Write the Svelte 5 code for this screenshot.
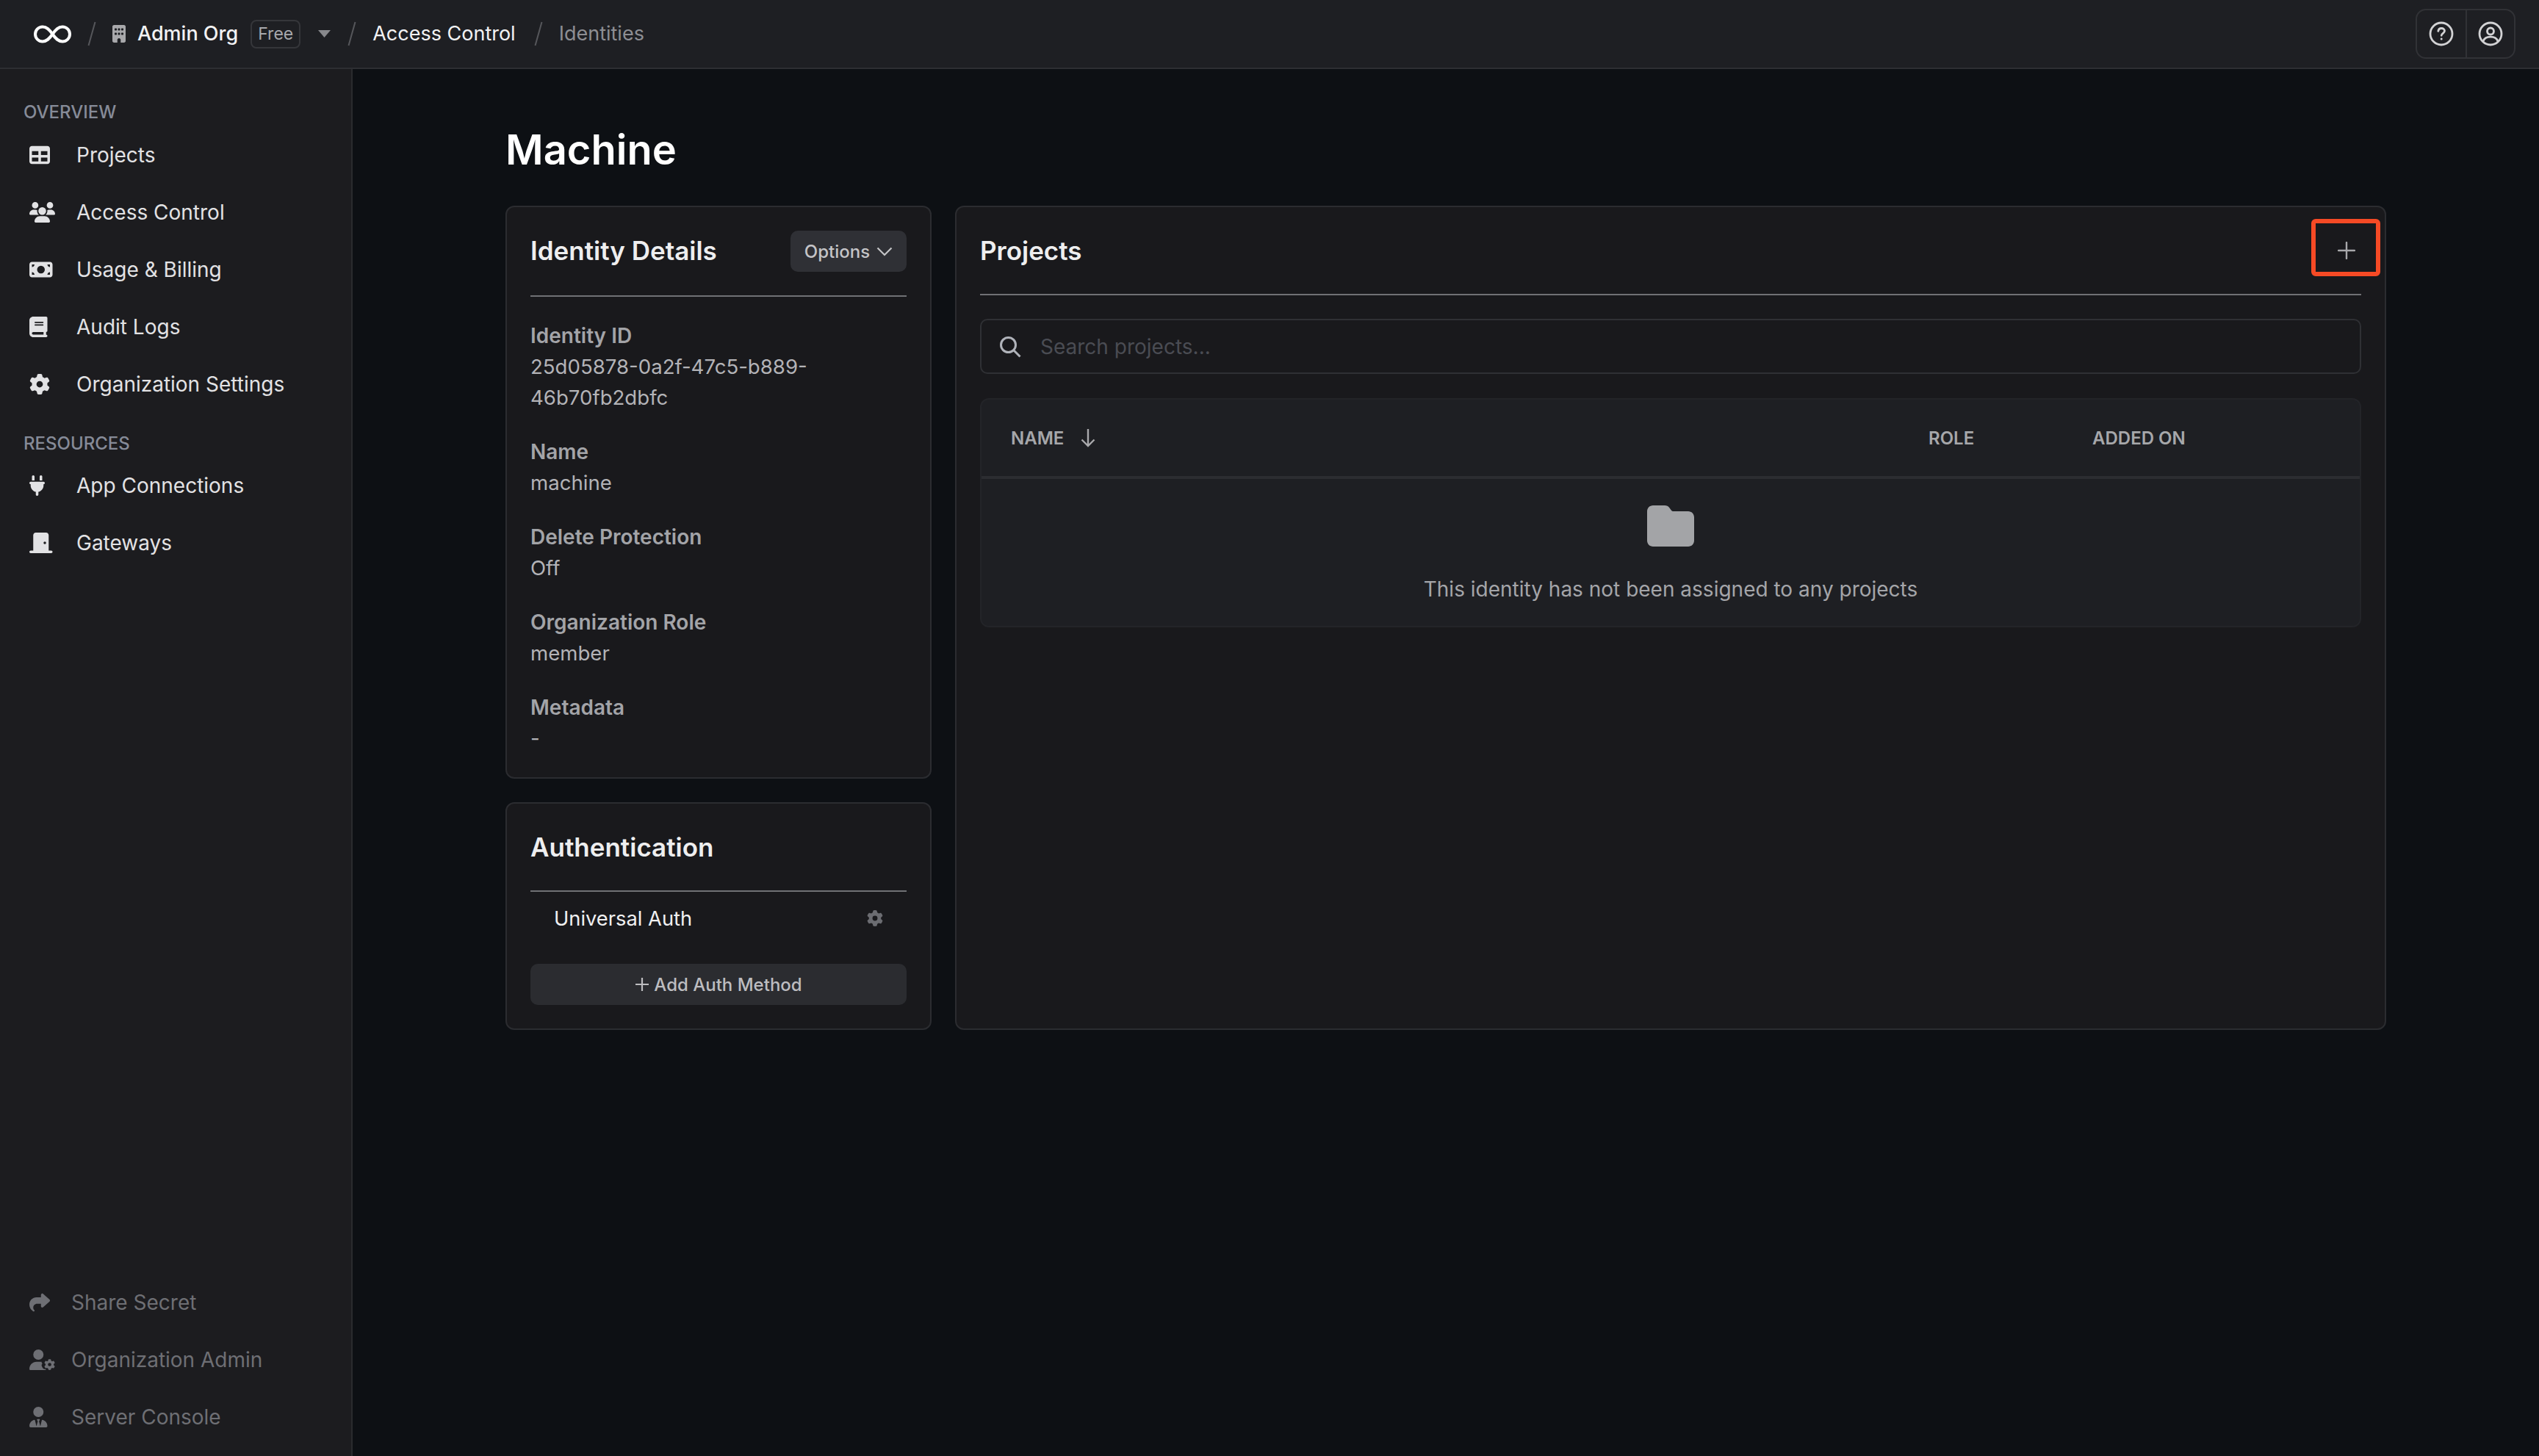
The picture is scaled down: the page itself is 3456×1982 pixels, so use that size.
<script>
  const gear =
    "M495.9 166.6c3.2 8.7 .5 18.4-6.4 24.6l-43.3 39.4c1.1 8.3 1.7 16.8 1.7 25.4s-.6 17.1-1.7 25.4l43.3 39.4c6.9 6.2 9.6 15.9 6.4 24.6c-4.4 11.9-9.7 23.3-15.8 34.3l-4.7 8.1c-6.6 11-14 21.4-22.1 31.2c-5.9 7.2-15.7 9.6-24.5 6.8l-55.7-17.7c-13.4 10.3-28.2 18.9-44 25.4l-12.5 57.1c-2 9.1-9 16.3-18.2 17.8c-13.8 2.3-28 3.5-42.5 3.5s-28.7-1.2-42.5-3.5c-9.2-1.5-16.2-8.7-18.2-17.8l-12.5-57.1c-15.8-6.5-30.6-15.1-44-25.4L83.1 425.9c-8.8 2.8-18.6 .3-24.5-6.8c-8.1-9.8-15.5-20.2-22.1-31.2l-4.7-8.1c-6.1-11-11.4-22.4-15.8-34.3c-3.2-8.7-.5-18.4 6.4-24.6l43.3-39.4C64.6 273.1 64 264.6 64 256s.6-17.1 1.7-25.4L22.4 191.2c-6.9-6.2-9.6-15.9-6.4-24.6c4.4-11.9 9.7-23.3 15.8-34.3l4.7-8.1c6.6-11 14-21.4 22.1-31.2c5.9-7.2 15.7-9.6 24.5-6.8l55.7 17.7c13.4-10.3 28.2-18.9 44-25.4l12.5-57.1c2-9.1 9-16.3 18.2-17.8C227.3 1.2 241.5 0 256 0s28.7 1.2 42.5 3.5c9.2 1.5 16.2 8.7 18.2 17.8l12.5 57.1c15.8 6.5 30.6 15.1 44 25.4l55.7-17.7c8.8-2.8 18.6-.3 24.5 6.8c8.1 9.8 15.5 20.2 22.1 31.2l4.7 8.1c6.1 11 11.4 22.4 15.8 34.3zM256 336a80 80 0 1 0 0-160 80 80 0 1 0 0 160z";

  // w = viewBox width, all icons are 512 tall
  const icons = {
    table: { w: 512, d: "M64 256V160H224v96H64zm0 64H224v96H64V320zm224 96V320H448v96H288zM448 256H288V160H448v96zM64 32C28.7 32 0 60.7 0 96V416c0 35.3 28.7 64 64 64H448c35.3 0 64-28.7 64-64V96c0-35.3-28.7-64-64-64H64z" },
    users: { w: 640, d: "M144 0a80 80 0 1 1 0 160A80 80 0 1 1 144 0zM512 0a80 80 0 1 1 0 160A80 80 0 1 1 512 0zM0 298.7C0 239.8 47.8 192 106.7 192h42.7c15.9 0 31 3.5 44.6 9.7c-1.3 7.2-1.9 14.7-1.9 22.3c0 38.2 16.8 72.5 43.3 96c-.2 0-.4 0-.7 0H21.3C9.6 320 0 310.4 0 298.7zM405.3 320c-.2 0-.4 0-.7 0c26.6-23.5 43.3-57.8 43.3-96c0-7.6-.7-15-1.9-22.3c13.6-6.3 28.7-9.7 44.6-9.7h42.7C592.2 192 640 239.8 640 298.7c0 11.8-9.6 21.3-21.3 21.3H405.3zM224 224a96 96 0 1 1 192 0 96 96 0 1 1 -192 0zM128 485.3C128 411.7 187.7 352 261.3 352H378.7C452.3 352 512 411.7 512 485.3c0 14.7-11.9 26.7-26.7 26.7H154.7c-14.7 0-26.7-11.9-26.7-26.7z" },
    money: { w: 576, d: "M64 64C28.7 64 0 92.7 0 128V384c0 35.3 28.7 64 64 64H512c35.3 0 64-28.7 64-64V128c0-35.3-28.7-64-64-64H64zm64 320H64V320c35.3 0 64 28.7 64 64zM64 192V128h64c0 35.3-28.7 64-64 64zM448 384c0-35.3 28.7-64 64-64v64H448zm64-192c-35.3 0-64-28.7-64-64h64v64zM288 160a96 96 0 1 1 0 192 96 96 0 1 1 0-192z" },
    book: { w: 448, d: "M96 0C43 0 0 43 0 96V416c0 53 43 96 96 96H384h32c17.7 0 32-14.3 32-32s-14.3-32-32-32V384c17.7 0 32-14.3 32-32V32c0-17.7-14.3-32-32-32H384 96zm0 384H352v64H96c-17.7 0-32-14.3-32-32s14.3-32 32-32zm32-240c0-8.8 7.2-16 16-16H336c8.8 0 16 7.2 16 16s-7.2 16-16 16H144c-8.8 0-16-7.2-16-16zm16 48H336c8.8 0 16 7.2 16 16s-7.2 16-16 16H144c-8.8 0-16-7.2-16-16s7.2-16 16-16z" },
    gear: { w: 512, d: gear },
    plug: { w: 384, d: "M96 0C78.3 0 64 14.3 64 32v96h64V32c0-17.7-14.3-32-32-32zM288 0c-17.7 0-32 14.3-32 32v96h64V32c0-17.7-14.3-32-32-32zM32 160c-17.7 0-32 14.3-32 32s14.3 32 32 32v32c0 77.4 55 142 128 156.8V480c0 17.7 14.3 32 32 32s32-14.3 32-32V412.8C297 398 352 333.4 352 256V224c17.7 0 32-14.3 32-32s-14.3-32-32-32H32z" },
    door: { w: 576, d: "M96 64c0-35.3 28.7-64 64-64H416c35.3 0 64 28.7 64 64V448h64c17.7 0 32 14.3 32 32s-14.3 32-32 32H432 144 32c-17.7 0-32-14.3-32-32s14.3-32 32-32H96V64zM384 288a32 32 0 1 0 0-64 32 32 0 1 0 0 64z" },
    share: { w: 512, d: "M307 34.8c-11.5 5.1-19 16.6-19 29.2v64H176C78.8 128 0 206.8 0 304C0 417.3 81.5 467.9 100.2 478.1c2.5 1.4 5.3 1.9 8.1 1.9c10.9 0 19.7-8.9 19.7-19.7c0-7.5-4.3-14.4-9.8-19.5C108.8 431.9 96 414.4 96 384c0-53 43-96 96-96h96v64c0 12.6 7.4 24.1 19 29.2s25 3 34.4-5.4l160-144c6.7-6.1 10.6-14.7 10.6-23.8s-3.8-17.7-10.6-23.8l-160-144c-9.4-8.5-22.9-10.6-34.4-5.4z" },
    userGear: { w: 640, d: "M224 0a128 128 0 1 1 0 256A128 128 0 1 1 224 0zM178.3 304h91.4c11.8 0 23.4 1.2 34.5 3.3c-2.1 18.5 7.4 35.6 21.8 44.8c-16.6 10.6-26.7 31.6-20 53.3c4 12.9 9.4 25.5 16.4 37.6s15.2 23.1 24.4 33c15.7 16.9 39.6 18.4 57.2 8.7v.9c0 9.2 2.7 18.5 7.9 26.3H29.7C13.3 512 0 498.7 0 482.3C0 383.8 79.8 304 178.3 304z" },
    userTie: { w: 448, d: "M96 128a128 128 0 1 0 256 0A128 128 0 1 0 96 128zm94.5 200.2l18.6 31L175.8 483.1l-36-146.9c-2-8.1-9.8-13.4-17.9-11.3C51.9 342.4 0 405.8 0 481.3c0 17 13.8 30.7 30.7 30.7H162.5c0 0 0 0 .1 0H168 280h5.5c0 0 0 0 .1 0H417.3c17 0 30.7-13.8 30.7-30.7c0-75.5-51.9-138.9-121.9-156.4c-8.1-2-15.9 3.3-17.9 11.3l-36 146.9L238.9 359.2l18.6-31c6.4-10.7-1.3-24.2-13.7-24.2H224 204.3c-12.4 0-20.1 13.6-13.7 24.2z" },
    building: { w: 384, d: "M48 0C21.5 0 0 21.5 0 48V464c0 26.5 21.5 48 48 48h96V432c0-26.5 21.5-48 48-48s48 21.5 48 48v80h96c26.5 0 48-21.5 48-48V48c0-26.5-21.5-48-48-48H48zM64 240c0-8.8 7.2-16 16-16h32c8.8 0 16 7.2 16 16v32c0 8.8-7.2 16-16 16H80c-8.8 0-16-7.2-16-16V240zm112-16h32c8.8 0 16 7.2 16 16v32c0 8.8-7.2 16-16 16H176c-8.8 0-16-7.2-16-16V240c0-8.8 7.2-16 16-16zm80 16c0-8.8 7.2-16 16-16h32c8.8 0 16 7.2 16 16v32c0 8.8-7.2 16-16 16H272c-8.8 0-16-7.2-16-16V240zM80 96h32c8.8 0 16 7.2 16 16v32c0 8.8-7.2 16-16 16H80c-8.8 0-16-7.2-16-16V112c0-8.8 7.2-16 16-16zm80 16c0-8.8 7.2-16 16-16h32c8.8 0 16 7.2 16 16v32c0 8.8-7.2 16-16 16H176c-8.8 0-16-7.2-16-16V112zM272 96h32c8.8 0 16 7.2 16 16v32c0 8.8-7.2 16-16 16H272c-8.8 0-16-7.2-16-16V112c0-8.8 7.2-16 16-16z" },
    folder: { w: 512, d: "M64 480H448c35.3 0 64-28.7 64-64V160c0-35.3-28.7-64-64-64H288c-10.1 0-19.6-4.7-25.6-12.8L243.2 57.6C231.1 41.5 212.1 32 192 32H64C28.7 32 0 60.7 0 96V416c0 35.3 28.7 64 64 64z" },
  };

  const overview = [
    { label: "Projects", icon: "table" },
    { label: "Access Control", icon: "users" },
    { label: "Usage & Billing", icon: "money" },
    { label: "Audit Logs", icon: "book" },
    { label: "Organization Settings", icon: "gear" },
  ];
  const resources = [
    { label: "App Connections", icon: "plug" },
    { label: "Gateways", icon: "door" },
  ];
  const footerLinks = [
    { label: "Share Secret", icon: "share" },
    { label: "Organization Admin", icon: "userGear" },
    { label: "Server Console", icon: "userTie" },
  ];
  const details = [
    { label: "Identity ID", value: "25d05878-0a2f-47c5-b889-46b70fb2dbfc" },
    { label: "Name", value: "machine" },
    { label: "Delete Protection", value: "Off" },
    { label: "Organization Role", value: "member" },
    { label: "Metadata", value: "-" },
  ];
</script>

{#snippet icon(name, size)}
  <svg class="fa" width={(icons[name].w / 512) * size} height={size} viewBox="0 0 {icons[name].w} 512" fill="currentColor">
    <path d={icons[name].d} />
    {#if name === "userGear"}
      <path d={gear} transform="translate(368 240) scale(.53)" />
    {/if}
  </svg>
{/snippet}

{#snippet slash(cls)}
  <svg class="slash {cls}" width="12" height="34" viewBox="0 0 12 34"><path d="M10.500 1 1.500 33" stroke="#56575b" stroke-width="2" /></svg>
{/snippet}

{#snippet navItem(item)}
  <a class="nav-item">
    <span class="nav-icon">{@render icon(item.icon, 28)}</span>
    <span>{item.label}</span>
  </a>
{/snippet}

<div class="app">
  <header class="topbar">
    <nav class="crumbs">
      <svg class="logo" width="53" height="25" viewBox="0 0 53 25" fill="none">
        <path d="M26.500 12.500C22 6 18.500 2.500 13 2.500a10 10 0 0 0 0 20c5.500 0 9-3.500 13.500-10S34.500 2.500 40 2.500a10 10 0 0 1 0 20c-5.500 0-9-3.500-13.500-10Z" stroke="#fff" stroke-width="4" />
      </svg>
      {@render slash("")}
      <span class="org-icon">{@render icon("building", 24)}</span>
      <span class="crumb org">Admin Org</span>
      <span class="plan">Free</span>
      <svg class="caret" width="17" height="10" viewBox="0 0 17 10"><path d="M0 0h17L8.500 10Z" fill="#87888c" /></svg>
      {@render slash("")}
      <span class="crumb access">Access Control</span>
      {@render slash("wide")}
      <span class="crumb muted">Identities</span>
    </nav>
    <div class="top-actions">
      <button aria-label="Help">
        <svg width="34" height="34" viewBox="0 0 34 34" fill="none" stroke="#d2d2d4" stroke-width="2.800">
          <circle cx="17" cy="17" r="15" />
          <path d="M12.800 13.400c.3-2.400 2.100-3.900 4.400-3.900 2.500 0 4.300 1.500 4.300 3.600 0 3.100-4.300 3.200-4.300 6.200" stroke-linecap="round" />
          <circle cx="17.200" cy="24" r="1.500" fill="#d2d2d4" stroke="none" />
        </svg>
      </button>
      <button aria-label="Account">
        <svg width="34" height="34" viewBox="0 0 34 34" fill="none" stroke="#d2d2d4" stroke-width="2.800">
          <circle cx="17" cy="17" r="15" />
          <circle cx="17" cy="13.500" r="4.500" />
          <path d="M6.800 27.500c1.400-3.900 5.400-6.300 10.200-6.300s8.800 2.400 10.200 6.300" />
        </svg>
      </button>
    </div>
  </header>

  <div class="body">
    <aside class="sidebar">
      <div class="nav-top">
        <div class="nav-title first">OVERVIEW</div>
        {#each overview as item}
          {@render navItem(item)}
        {/each}
        <div class="nav-title second">RESOURCES</div>
        {#each resources as item}
          {@render navItem(item)}
        {/each}
      </div>
      <div class="nav-bottom">
        {#each footerLinks as item}
          {@render navItem(item)}
        {/each}
      </div>
    </aside>

    <main class="content">
      <h1>Machine</h1>
      <div class="columns">
        <div class="left">
          <section class="card">
            <div class="card-head">
              <h2>Identity Details</h2>
              <button class="options">
                Options
                <svg width="22" height="13" viewBox="0 0 22 13" fill="none"><path d="M1.500 1.500 11 11l9.500-9.500" stroke="#c4c4c7" stroke-width="2.200" /></svg>
              </button>
            </div>
            <div class="details">
              {#each details as row}
                <div class="detail">
                  <div class="detail-label">{row.label}</div>
                  <div class="detail-value">{row.value}</div>
                </div>
              {/each}
            </div>
          </section>

          <section class="card">
            <div class="card-head auth-head">
              <h2>Authentication</h2>
            </div>
            <div class="auth-row">
              <span>Universal Auth</span>
              <span class="auth-gear">{@render icon("gear", 22)}</span>
            </div>
            <button class="add-auth">
              <svg width="20" height="20" viewBox="0 0 20 20"><path d="M10 1v18M1 10h18" stroke="#bdbdc0" stroke-width="2.200" /></svg>
              Add Auth Method
            </button>
          </section>
        </div>

        <section class="card projects">
          <div class="card-head projects-head">
            <h2>Projects</h2>
            <button class="add-project" aria-label="Add project">
              <svg width="24" height="24" viewBox="0 0 24 24"><path d="M12 1v22M1 12h22" stroke="#a8a8ab" stroke-width="2.400" stroke-linecap="round" /></svg>
            </button>
            <span class="highlight"></span>
          </div>

          <label class="search">
            <svg width="30" height="30" viewBox="0 0 30 30" fill="none" stroke="#b0b3ba" stroke-width="3">
              <circle cx="12.500" cy="12.500" r="10" />
              <path d="m20 20 8.500 8.500" />
            </svg>
            <input placeholder="Search projects..." />
          </label>

          <div class="table-wrap">
            <table>
              <colgroup>
                <col style="width: 1249px" />
                <col style="width: 223px" />
                <col />
              </colgroup>
              <thead>
                <tr>
                  <th>
                    <span class="sort">
                      NAME
                      <svg width="22" height="26" viewBox="0 0 22 26" fill="none"><path d="M11 1v23M2.500 15.500 11 24l8.500-8.500" stroke="#a9a9ac" stroke-width="2.400" /></svg>
                    </span>
                  </th>
                  <th>ROLE</th>
                  <th>ADDED ON</th>
                </tr>
              </thead>
              <tbody>
                <tr>
                  <td colspan="3">
                    <div class="empty">
                      <span class="empty-icon">{@render icon("folder", 64)}</span>
                      <div>This identity has not been assigned to any projects</div>
                    </div>
                  </td>
                </tr>
              </tbody>
            </table>
          </div>
        </section>
      </div>
    </main>
  </div>
</div>

<style>
  :global(body) {
    margin: 0;
    background: #0d1014;
  }

  .app {
    height: 1982px;
    display: flex;
    flex-direction: column;
    font-family: Inter, "Liberation Sans", sans-serif;
    font-size: 28px;
    color: #e4e4e6;
    overflow: hidden;
  }

  button {
    font-family: inherit;
    border: none;
    background: none;
    padding: 0;
  }

  .fa {
    display: block;
  }

  /* top bar */
  .topbar {
    height: 92px;
    flex: none;
    display: flex;
    align-items: center;
    justify-content: space-between;
    background: #1e1f23;
    border-bottom: 2px solid #2d2e32;
    padding: 0 32px 0 45px;
  }

  .crumbs {
    display: flex;
    align-items: center;
  }

  .slash {
    margin: 0 22px 0 21px;
  }

  .slash.wide {
    margin-left: 25px;
  }

  .org-icon {
    color: #a8a8ab;
    margin-right: 16px;
  }

  .crumb {
    font-size: 27px;
    font-weight: 500;
    color: #f2f2f3;
    line-height: 40px;
    white-space: nowrap;
  }

  .crumb.access {
    font-weight: 400;
  }

  .crumb.muted {
    font-weight: 400;
    color: #8d8e93;
  }

  .plan {
    margin-left: 17px;
    height: 39px;
    width: 68px;
    box-sizing: border-box;
    display: flex;
    align-items: center;
    justify-content: center;
    border: 2px solid #35363a;
    border-radius: 8px;
    font-size: 23px;
    color: #a8a9ad;
  }

  .caret {
    margin: 0 2px 0 24px;
  }

  .top-actions {
    display: flex;
    height: 68px;
    box-sizing: border-box;
    border: 2px solid #313236;
    border-radius: 14px;
  }

  .top-actions button {
    width: 66px;
    display: flex;
    align-items: center;
    justify-content: center;
  }

  .top-actions button + button {
    border-left: 2px solid #313236;
  }

  .body {
    flex: 1;
    display: flex;
    min-height: 0;
  }

  /* sidebar */
  .sidebar {
    width: 480px;
    flex: none;
    box-sizing: border-box;
    background: #1c1c1f;
    border-right: 2px solid #2a2b2e;
    display: flex;
    flex-direction: column;
    justify-content: space-between;
  }

  .nav-title {
    font-size: 24px;
    font-weight: 500;
    line-height: 32px;
    color: #868b98;
    padding-left: 32px;
  }

  .nav-title.first {
    margin-top: 43px;
    margin-bottom: 3px;
  }

  .nav-title.second {
    margin-top: 26px;
    margin-bottom: 2px;
  }

  .nav-item {
    height: 78px;
    display: flex;
    align-items: center;
    padding-left: 40px;
    color: #e2e2e4;
    white-space: nowrap;
  }

  .nav-icon {
    width: 64px;
    flex: none;
  }

  .nav-bottom {
    padding-bottom: 14px;
  }

  .nav-bottom .nav-item {
    color: #6e6f74;
  }

  .nav-bottom .nav-icon {
    width: 57px;
  }

  /* main */
  .content {
    flex: 1;
    padding: 74px 208px 0;
    min-width: 0;
  }

  h1 {
    margin: 0 0 40px;
    font-size: 56px;
    line-height: 72px;
    font-weight: 600;
    color: #fff;
  }

  .columns {
    display: flex;
    gap: 32px;
    align-items: stretch;
  }

  .left {
    width: 580px;
    flex: none;
    display: flex;
    flex-direction: column;
    gap: 32px;
  }

  .card {
    box-sizing: border-box;
    background: #19191c;
    border: 2px solid #2b2c30;
    border-radius: 12px;
    padding: 32px;
  }

  .card-head {
    display: flex;
    align-items: flex-start;
    justify-content: space-between;
    border-bottom: 2px solid #707175;
    height: 88px;
  }

  .card-head h2 {
    margin: 0;
    font-size: 35px;
    font-weight: 600;
    line-height: 54px;
    color: #eeeeef;
  }

  .options {
    height: 56px;
    width: 158px;
    display: flex;
    align-items: center;
    justify-content: center;
    gap: 9px;
    background: #2f3035;
    border-radius: 10px;
    font-size: 24px;
    font-weight: 500;
    color: #c4c4c7;
  }

  .details {
    padding-top: 32px;
  }

  .detail {
    margin-bottom: 32px;
    line-height: 42px;
  }

  .detail:last-child {
    margin-bottom: 0;
  }

  .detail-label {
    font-weight: 600;
    color: #a3a4a8;
  }

  .detail-value {
    font-size: 27.600px;
    color: #b3b3b7;
  }

  .auth-head {
    height: 86px;
  }

  .auth-row {
    height: 72px;
    display: flex;
    align-items: center;
    justify-content: space-between;
    padding: 0 32px;
    font-size: 27.300px;
    color: #f0f0f1;
  }

  .auth-gear {
    color: #6b6c71;
  }

  .add-auth {
    width: 100%;
    height: 56px;
    margin-top: 26px;
    display: flex;
    align-items: center;
    justify-content: center;
    gap: 6px;
    background: #2b2c30;
    border-radius: 10px;
    font-size: 24px;
    font-weight: 500;
    color: #bdbdc0;
  }

  .projects {
    flex: 1;
    min-width: 0;
  }

  .projects-head {
    position: relative;
    height: 86px;
  }

  .add-project {
    height: 54px;
    display: flex;
    align-items: center;
    padding-right: 8px;
  }

  /* red annotation over the add button */
  .highlight {
    position: absolute;
    top: -16px;
    right: -26px;
    width: 94px;
    height: 78px;
    box-sizing: border-box;
    border: 6px solid #f64a25;
    border-radius: 6px;
  }

  .search {
    margin-top: 32px;
    height: 75px;
    box-sizing: border-box;
    display: flex;
    align-items: center;
    gap: 24px;
    padding-left: 24px;
    border: 2px solid #2f3034;
    border-radius: 10px;
  }

  .search input {
    flex: 1;
    border: none;
    outline: none;
    background: none;
    font: inherit;
    color: #e4e4e6;
  }

  .search input::placeholder {
    color: #4a4c53;
  }

  .table-wrap {
    margin-top: 33px;
    background: #1e1f23;
    border: 2px solid #232428;
    border-radius: 12px;
    overflow: hidden;
  }

  table {
    width: 100%;
    table-layout: fixed;
    border-collapse: collapse;
  }

  th {
    height: 106px;
    padding: 0 40px;
    box-sizing: border-box;
    text-align: left;
    font-size: 24px;
    font-weight: 600;
    color: #a6a7aa;
    border-bottom: 4px solid #2c2d31;
  }

  .sort {
    display: flex;
    align-items: center;
    gap: 22px;
  }

  td {
    padding: 0;
  }

  .empty {
    height: 200px;
    box-sizing: border-box;
    padding-top: 32px;
    display: flex;
    flex-direction: column;
    align-items: center;
    color: #a4a5a9;
    line-height: 42px;
  }

  .empty-icon {
    color: #a3a4a7;
    margin-bottom: 33px;
  }
</style>
